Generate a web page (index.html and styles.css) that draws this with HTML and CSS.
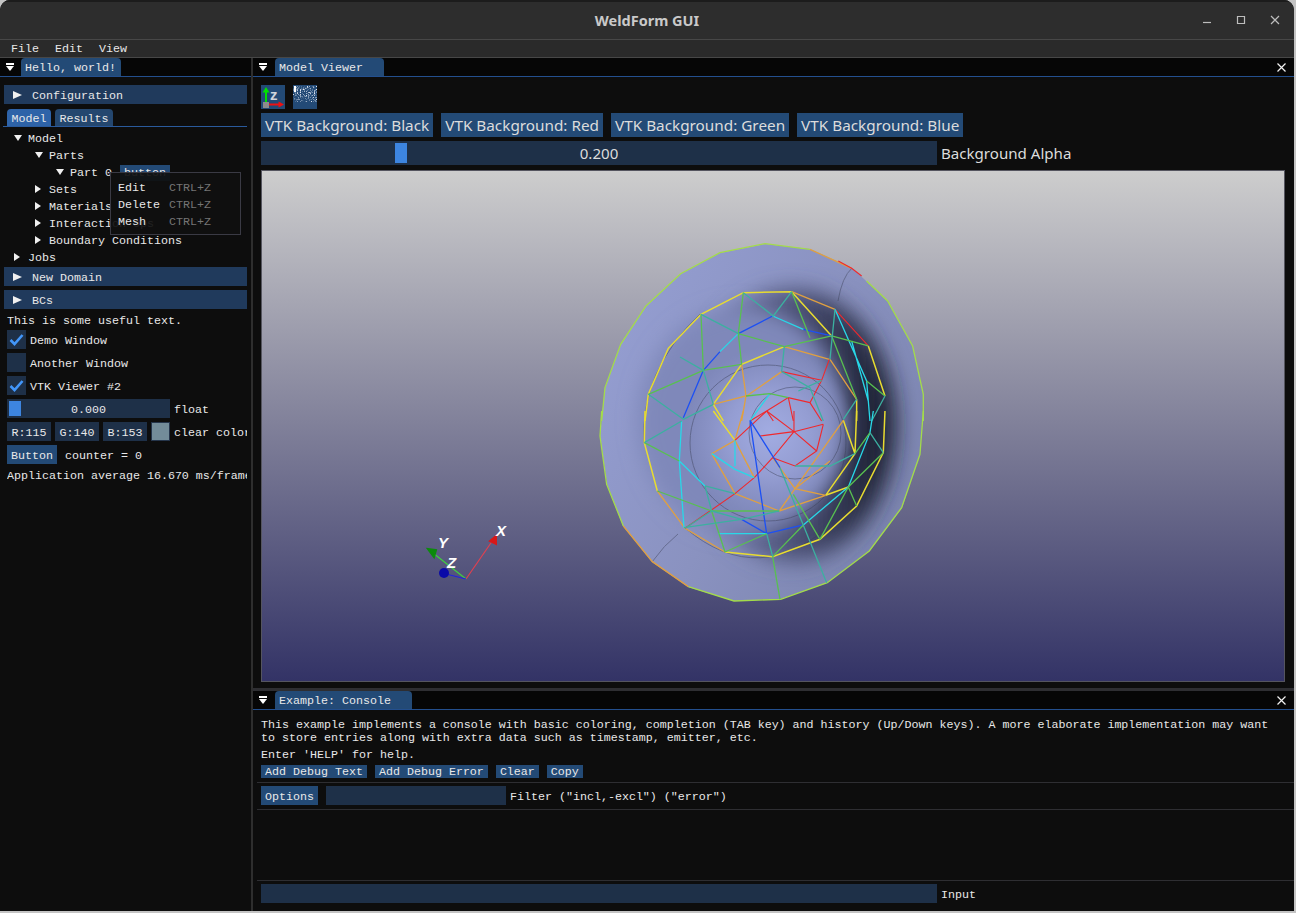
FILE: index.html

```html
<!DOCTYPE html>
<html lang="en">
<head>
    <meta charset="UTF-8">
    <title>WeldForm GUI</title>
    <link rel="stylesheet" href="styles.css">
</head>
<body>

<div class="window">
    <header class="titlebar">
        <span class="app-title">WeldForm GUI</span>
        <div class="win-controls">
            <svg width="12" height="12" viewBox="0 0 12 12"><path d="M2 8.500H10" class="win-icon"/></svg>
            <svg width="12" height="12" viewBox="0 0 12 12"><path d="M2.500 2.500H9.500V9.500H2.500Z" class="win-icon"/></svg>
            <svg width="12" height="12" viewBox="0 0 12 12"><path d="M2 2L10 10M10 2L2 10" class="win-icon"/></svg>
        </div>
    </header>

    <nav class="menubar">
        <span>File</span><span>Edit</span><span>View</span>
    </nav>

    <div class="workspace">
        <aside class="dock-left">
            <div class="tabbar">
                <i class="menu-btn"></i>
                <span class="dock-tab">Hello, world!</span>
            </div>
            <div class="panel">
                <div class="header-row"><i class="arrow-right big"></i>Configuration</div>
                <div class="inner-tabs">
                    <span class="inner-tab active">Model</span>
                    <span class="inner-tab">Results</span>
                </div>
                <div class="tree">
                    <div class="tree-row lvl0"><i class="arrow-down"></i>Model</div>
                    <div class="tree-row lvl1"><i class="arrow-down"></i>Parts</div>
                    <div class="tree-row lvl2"><i class="arrow-down"></i>Part 0<span class="tiny-btn">button</span></div>
                    <div class="tree-row lvl1"><i class="arrow-right"></i>Sets</div>
                    <div class="tree-row lvl1"><i class="arrow-right"></i>Materials</div>
                    <div class="tree-row lvl1"><i class="arrow-right"></i>Interaction Ops</div>
                    <div class="tree-row lvl1"><i class="arrow-right"></i>Boundary Conditions</div>
                    <div class="tree-row lvl0"><i class="arrow-right"></i>Jobs</div>
                </div>
                <div class="header-row"><i class="arrow-right big"></i>New Domain</div>
                <div class="header-row"><i class="arrow-right big"></i>BCs</div>
                <div class="text-row">This is some useful text.</div>
                <div class="check-row">
                    <span class="checkbox"><svg width="19" height="19" viewBox="0 0 19 19"><path d="M3.500 10L7.500 14L15.500 5" class="tick"/></svg></span><span>Demo Window</span>
                </div>
                <div class="check-row"><span class="checkbox"></span><span>Another Window</span></div>
                <div class="check-row">
                    <span class="checkbox"><svg width="19" height="19" viewBox="0 0 19 19"><path d="M3.500 10L7.500 14L15.500 5" class="tick"/></svg></span><span>VTK Viewer #2</span>
                </div>
                <div class="check-row">
                    <span class="slider float-slider"><i class="grab"></i>0.000</span><span>float</span>
                </div>
                <div class="check-row">
                    <span class="color-field">R:115</span>
                    <span class="color-field">G:140</span>
                    <span class="color-field">B:153</span>
                    <span class="swatch"></span><span>clear color</span>
                </div>
                <div class="check-row">
                    <span class="btn">Button</span><span class="counter">counter = 0</span>
                </div>
                <div class="text-row avg-row">Application average 16.670 ms/frame (60.0 FPS)</div>
            </div>

            <!-- context menu sits over the tree -->
            <div class="context-menu">
                <div class="menu-item"><span>Edit</span><em>CTRL+Z</em></div>
                <div class="menu-item"><span>Delete</span><em>CTRL+Z</em></div>
                <div class="menu-item"><span>Mesh</span><em>CTRL+Z</em></div>
            </div>
        </aside>

        <main class="dock-right">
            <section class="viewer">
                <div class="tabbar">
                    <i class="menu-btn"></i>
                    <span class="dock-tab viewer-tab">Model Viewer</span>
                    <svg class="close-x" width="9" height="9" viewBox="0 0 9 9"><path d="M.5 .5L8.500 8.500M8.500 .5L.5 8.500"/></svg>
                </div>
                <div class="viewer-body">
                    <div class="icon-row">
                        <span class="icon-btn">
                            <svg width="24" height="24" viewBox="0 0 24 24">
                                <path d="M5 18V6" class="ax-green"/>
                                <path d="M5 2L1.500 7.500H8.500Z" fill="#00e000"/>
                                <path d="M5 19.500H19" class="ax-red"/>
                                <path d="M23 19.500L17.500 16.500V22.500Z" fill="#f01010"/>
                                <rect x="2" y="17" width="6" height="6" fill="#8c8c8c"/>
                                <text x="9" y="15" class="ax-z">z</text>
                            </svg>
                        </span>
                        <span class="icon-btn">
                            <svg width="24" height="24" viewBox="0 0 24 24">
                                <filter id="speckle" x="0" y="0" width="100%" height="100%">
                                    <feTurbulence type="fractalNoise" baseFrequency="0.7" numOctaves="2" seed="7"/>
                                    <feColorMatrix values="0 0 0 0 .75 0 0 0 0 .8 0 0 0 0 .88 3 3 0 0 -3"/>
                                </filter>
                                <rect y="1" width="24" height="16" filter="url(#speckle)"/>
                                <rect x="1" y="1" width="2" height="6" fill="#fff"/>
                            </svg>
                        </span>
                    </div>
                    <div class="bg-buttons">
                        <span class="vtk-btn">VTK Background: Black</span>
                        <span class="vtk-btn">VTK Background: Red</span>
                        <span class="vtk-btn">VTK Background: Green</span>
                        <span class="vtk-btn">VTK Background: Blue</span>
                    </div>
                    <div class="alpha-row">
                        <span class="slider alpha-slider"><i class="grab alpha-grab"></i>0.200</span>
                        <span>Background Alpha</span>
                    </div>
                    <div class="viewport">
                        <svg width="1022" height="510" viewBox="262 170 1022 510">
                            <defs>
                                <clipPath id="ring-clip">
                                    <polygon points="765,243 810,248 852,267 888,300 913,345 923,393 920,453 902,507 869,550 827,582 781,598 734,600 688,586 652,561 623,525 607,483 600,435 605,387 621,343 646,305 681,273 720,252"/>
                                </clipPath>
                                <linearGradient id="ring-fill" x1="0" y1="0" x2="1" y2="0.600">
                                    <stop offset="0" stop-color="#97a1d6"/>
                                    <stop offset=".6" stop-color="#8a92c0"/>
                                    <stop offset="1" stop-color="#7c85b0"/>
                                </linearGradient>
                                <linearGradient id="crater-fill">
                                    <stop offset="0" stop-color="#7078a8"/>
                                    <stop offset=".55" stop-color="#474c70"/>
                                    <stop offset="1" stop-color="#141826"/>
                                </linearGradient>
                                <radialGradient id="sphere-fill">
                                    <stop offset="0" stop-color="#a2ace2"/>
                                    <stop offset=".5" stop-color="#949dd2"/>
                                    <stop offset="1" stop-color="#8f98cc" stop-opacity="0"/>
                                </radialGradient>
                                <filter id="soft" x="-40%" y="-40%" width="180%" height="180%"><feGaussianBlur stdDeviation="10"/></filter>
                                <filter id="softer" x="-30%" y="-30%" width="160%" height="160%"><feGaussianBlur stdDeviation="11"/></filter>
                            </defs>

                            <g clip-path="url(#ring-clip)">
                                <rect x="590" y="230" width="345" height="380" fill="url(#ring-fill)"/>
                                <ellipse cx="792" cy="424" rx="104" ry="136" fill="url(#crater-fill)" filter="url(#softer)"/>
                                <ellipse cx="742" cy="420" rx="104" ry="114" fill="#7f88ba" filter="url(#soft)"/>
                                <ellipse cx="770" cy="432" rx="84" ry="86" fill="url(#sphere-fill)"/>
                            </g>

                            <g class="scene">
                                <g class="arcs">
                                    <circle cx="768" cy="442" r="78"/>
                                    <circle cx="795" cy="432" r="46"/>
                                    <path d="M838 300Q842 276 852 267M652 561Q664 544 678 533M644 442Q640 370 700 313M685 527Q760 590 835 520"/>
                                </g>

                                <g class="mesh" transform="translate(590 230) scale(.3333)">
                                    <path class="m-l" d="M525 38L660 55M830 150L893 210L968 345L1000 490V570M35 570L45 470L92 340L168 225L272 128L390 65L525 38"/>
                                    <path class="m-o" d="M660 55L785 112"/>
                                    <path class="m-r" d="M745 90L785 112L815 135"/>
                                    <path class="m-y" d="M165 570L175 490L235 352L333 250L460 185L605 182L725 315M835 345L885 495M370 520L455 400L583 347M370 520L400 570M800 505V570"/>
                                    <path class="m-o" d="M605 182L735 235M583 347L718 385M720 385L800 505M455 400L468 495L455 570M470 495L575 422M370 520L468 495"/>
                                    <path class="m-r" d="M735 235L835 345M575 422L695 448M718 385L695 448L660 515M530 540L595 500L660 515M530 540L480 570M530 540L550 570M660 515L695 570M595 500L610 570"/>
                                    <path class="m-b" d="M340 418L280 560M445 308L548 255M640 295L725 315M340 418L390 362"/>
                                    <path class="m-c" d="M445 308L390 362M548 255L640 295M785 330L835 510M735 235L830 450L840 570M540 488L480 570"/>
                                    <path class="m-g" d="M460 185L445 308L455 400M333 250L340 418L455 400M583 347L725 315M445 308L583 347M340 418L175 490M725 315L800 505M725 315L835 345M830 450L885 495M605 182L660 320M540 488L595 500M468 495L540 488"/>
                                    <path class="m-t" d="M445 308L333 250M340 418L370 520M340 418L270 378M575 422L660 470L700 570M695 448L625 480M175 490L280 565M370 520L280 565M583 347L575 422M460 185L550 255L605 182M735 235L720 385M885 495L845 570M800 505L760 565"/>
                                </g>

                                <g class="mesh" transform="translate(590 410) scale(.3333)">
                                    <path class="m-l" d="M35 0L30 75L50 220L100 345M295 527L432 570L572 565L712 515L838 420L935 290L990 130L1000 0"/>
                                    <path class="m-o" d="M100 345L187 452L295 527"/>
                                    <path class="m-y" d="M165 0L163 95L202 240M800 0L795 128M885 0L880 125L800 285L690 385L548 437L405 423M370 0L435 88M795 128L707 253M795 128L760 28M775 228L707 253"/>
                                    <path class="m-o" d="M435 88L365 128L435 248M202 240L285 352L405 423M707 253L568 300L435 248M760 28L615 233L568 300M707 253L615 233L548 140M460 0L435 88L493 200M720 150L615 233"/>
                                    <path class="m-r" d="M612 62L530 0M612 62L700 40M612 62L680 120L615 165L548 140L612 62M612 62L612 0M612 62L510 75M493 200L435 248L285 352M493 200L548 140M680 120L700 40M530 0L435 88"/>
                                    <path class="m-b" d="M480 28L505 200L530 368M480 28L570 170M530 368L640 342M455 325L530 368"/>
                                    <path class="m-c" d="M275 30L268 150L282 350M268 150L345 225M640 342L775 228L840 65L850 0M385 368L530 368M435 88V165M365 128L435 175L493 200"/>
                                    <path class="m-g" d="M365 300L405 423M610 250L690 385M405 423L530 368M548 437L570 565M365 300L568 300M202 240L365 300M163 95L268 150M775 228L880 125M840 65L795 128M690 385L775 228L800 285M548 437L640 342"/>
                                    <path class="m-t" d="M530 368L548 437M570 170L710 515M345 225L435 248M345 225L365 300L455 325M285 352L365 300M795 128L720 165L615 165M275 30L163 95M282 350L455 325L568 300M840 65L880 125"/>
                                </g>
                            </g>

                            <g class="axes">
                                <path d="M466 578L493 539" class="ax-x"/>
                                <path d="M466 578L433 552" class="ax-y"/>
                                <path d="M466 578L446 573" class="ax-zl"/>
                                <path d="M496 535L490 540L496 543Z" fill="#d81818" stroke="#d81818" stroke-width="2"/>
                                <path d="M428 548L436 549L434 556Z" fill="#0c8a0c" stroke="#0c8a0c" stroke-width="2"/>
                                <circle cx="444" cy="572" r="5" fill="#0a0aa8"/>
                                <text x="496" y="535" class="ax-label">X</text>
                                <text x="438" y="547" class="ax-label">Y</text>
                                <text x="447" y="567" class="ax-label">Z</text>
                            </g>
                        </svg>
                    </div>
                </div>
            </section>

            <section class="console">
                <div class="tabbar">
                    <i class="menu-btn"></i>
                    <span class="dock-tab console-tab">Example: Console</span>
                    <svg class="close-x" width="9" height="9" viewBox="0 0 9 9"><path d="M.5 .5L8.500 8.500M8.500 .5L.5 8.500"/></svg>
                </div>
                <div class="console-body">
                    <p class="console-text">This example implements a console with basic coloring, completion (TAB key) and history (Up/Down keys). A more elaborate implementation may want<br>to store entries along with extra data such as timestamp, emitter, etc.</p>
                    <p class="console-help">Enter 'HELP' for help.</p>
                    <div class="console-buttons">
                        <span class="small-btn">Add Debug Text</span>
                        <span class="small-btn">Add Debug Error</span>
                        <span class="small-btn">Clear</span>
                        <span class="small-btn">Copy</span>
                    </div>
                    <div class="filter-row">
                        <span class="btn">Options</span>
                        <span class="filter-input"></span>
                        <span>Filter ("incl,-excl") ("error")</span>
                    </div>
                    <div class="log-area"></div>
                    <div class="input-row">
                        <span class="console-input"></span>
                        <span>Input</span>
                    </div>
                </div>
            </section>
        </main>
    </div>
</div>

</body>
</html>
```

FILE: styles.css

```css
* {
    box-sizing: border-box;
}
body {
    margin: 0;
    width: 1296px;
    height: 913px;
    overflow: hidden;
    background-color: #c4c4c4;
    font-family: "Liberation Mono", "DejaVu Sans Mono", monospace;
    font-size: 11.67px;
    line-height: 13px;
    color: #e8e8e8;
    white-space: nowrap;
}
i {
    display: block;
}
p {
    margin: 0;
}
.window {
    width: 1294px;
    height: 911px;
    display: flex;
    flex-direction: column;
    background-color: #0d0d0d;
    border-radius: 10px 10px 0 0;
    overflow: hidden;
}

/* title bar + menu */
.titlebar {
    height: 40px;
    flex: none;
    display: flex;
    align-items: center;
    justify-content: center;
    position: relative;
    background-color: #2d2d2d;
    border-top: 2px solid #1c1c1c;
    border-bottom: 1px solid #474747;
}
.app-title {
    font-family: "Noto Sans", sans-serif;
    font-weight: 700;
    font-size: 14.500px;
    color: #c9c9c9;
}
.win-controls {
    position: absolute;
    right: 13px;
    top: 12px;
    display: flex;
    gap: 22px;
}
.win-icon {
    fill: none;
    stroke: #bdbdbd;
    stroke-width: 1.200;
}
.menubar {
    height: 18px;
    flex: none;
    display: flex;
    gap: 16px;
    padding-left: 11px;
    align-items: center;
    background-color: #2a2a2a;
    border-bottom: 1px solid #474747;
}
.menubar span {
    padding-top: 2px;
}
.workspace {
    flex: 1;
    display: flex;
    min-height: 0;
}

/* docks */
.dock-left {
    width: 253px;
    flex: none;
    position: relative;
    border-right: 2px solid #2e2e2e;
    overflow: hidden;
}
.dock-right {
    flex: 1;
    min-width: 0;
    display: flex;
    flex-direction: column;
}
.tabbar {
    height: 19px;
    flex: none;
    display: flex;
    align-items: flex-end;
    position: relative;
    background-color: #060606;
    border-bottom: 1px solid #234f8e;
}
.dock-tab {
    height: 18px;
    margin-left: 21px;
    padding: 4px 4px 0;
    background-color: #234a76;
    border-radius: 4px 4px 0 0;
}
.dock-left .dock-tab {
    width: 100px;
}
.viewer-tab {
    width: 109px;
    margin-left: 22px;
}
.console-tab {
    width: 137px;
    margin-left: 22px;
}
.menu-btn {
    position: absolute;
    left: 6px;
    top: 5px;
    width: 8px;
    height: 2px;
    background-color: #fff;
}
.menu-btn::after {
    content: "";
    position: absolute;
    top: 3px;
    left: 0;
    border-style: solid;
    border-width: 5px 4px 0;
    border-color: #fff transparent transparent;
}
.close-x {
    position: absolute;
    right: 8px;
    top: 5px;
}
.close-x path {
    stroke: #f2f2f2;
    stroke-width: 1.200;
}

/* left panel */
.panel {
    padding: 8px 4px 0;
    width: 251px;
}
.panel > * {
    overflow: hidden;
}
.header-row {
    height: 19px;
    line-height: 22px;
    margin-bottom: 4px;
    padding-left: 28px;
    position: relative;
    background-color: #203a5c;
}
.arrow-right,
.arrow-down {
    position: absolute;
    width: 0;
    height: 0;
    border-style: solid;
}
.arrow-right {
    border-width: 4px 0 4px 6px;
    border-color: transparent transparent transparent #f0f0f0;
}
.arrow-down {
    border-width: 6px 4px 0;
    border-color: #f0f0f0 transparent transparent;
}
.arrow-right.big {
    left: 9px;
    top: 6px;
    border-width: 4.500px 0 4.500px 9px;
}
.inner-tabs {
    height: 18px;
    margin-top: 5px;
    padding-left: 4px;
    display: flex;
    gap: 4px;
    align-items: flex-end;
    border-bottom: 1px solid #2a5a9c;
    margin-left: -1px;
}
.inner-tab {
    height: 17px;
    padding: 4px 4.500px 0;
    background-color: #24476f;
    border-radius: 4px 4px 0 0;
}
.inner-tab.active {
    background-color: #2e63a8;
}
.tree {
    padding-top: 3px;
    margin-bottom: 1px;
}
.tree-row {
    height: 17px;
    line-height: 19px;
    position: relative;
}
.lvl0 {
    padding-left: 24px;
}
.lvl1 {
    padding-left: 45px;
}
.lvl2 {
    padding-left: 66px;
}
.lvl0 i {
    left: 10px;
    top: 5px;
}
.lvl1 i {
    left: 31px;
    top: 5px;
}
.lvl2 i {
    left: 52px;
    top: 5px;
}
.tree-row i.arrow-right {
    top: 4px;
}
.tiny-btn {
    margin-left: 8px;
    padding: 1px 4px;
    background-color: #234a76;
}
.text-row {
    height: 15px;
    line-height: 17px;
    margin: 0 0 2px 3px;
}
.avg-row {
    margin-top: 0;
}
.check-row {
    height: 19px;
    line-height: 22px;
    margin: 0 0 4px 3px;
    display: flex;
    align-items: flex-start;
    gap: 4px;
}
.checkbox {
    width: 19px;
    height: 19px;
    flex: none;
    background-color: #1e3048;
}
.tick {
    fill: none;
    stroke: #4296fa;
    stroke-width: 2.600;
}
.slider {
    height: 19px;
    position: relative;
    flex: none;
    text-align: center;
    background-color: #1e3048;
}
.float-slider {
    width: 163px;
}
.grab {
    position: absolute;
    left: 2px;
    top: 2px;
    bottom: 2px;
    width: 12px;
    background-color: #3d85e0;
}
.color-field {
    width: 44px;
    height: 19px;
    flex: none;
    text-align: center;
    background-color: #1e3048;
}
.swatch {
    width: 19px;
    height: 19px;
    flex: none;
    background-color: #738c99;
    border: 1px solid #25354b;
}
.btn {
    height: 19px;
    line-height: 22px;
    padding: 0 4px;
    background-color: #234a76;
}
.counter {
    margin-left: 4px;
}

/* popup over the tree */
.context-menu {
    position: absolute;
    left: 110px;
    top: 114px;
    width: 131px;
    height: 63px;
    padding: 6px 7px;
    background-color: rgba(15, 15, 15, 0.92);
    border: 1px solid #3a3a44;
}
.menu-item {
    height: 17px;
    line-height: 19px;
    display: flex;
}
.menu-item span {
    width: 51px;
}
.menu-item em {
    font-style: normal;
    color: #757575;
}

/* model viewer */
.viewer {
    height: 633px;
    flex: none;
    border-bottom: 3px solid #2e2e32;
}
.viewer-body {
    padding: 8px 0 0 8px;
}
.icon-row {
    display: flex;
    gap: 8px;
    margin-bottom: 4px;
}
.icon-btn {
    width: 24px;
    height: 24px;
    background-color: #234a76;
}
.icon-btn svg {
    display: block;
}
.ax-green {
    stroke: #00e000;
    stroke-width: 2;
}
.ax-red {
    stroke: #f01010;
    stroke-width: 2;
}
.ax-z {
    font-family: "Liberation Sans", sans-serif;
    font-weight: 700;
    font-size: 15px;
    fill: #d0d4dc;
}
.bg-buttons {
    display: flex;
    gap: 8px;
    margin-bottom: 4px;
}
.vtk-btn {
    height: 24px;
    line-height: 24px;
    padding: 0 4px;
    background-color: #234a76;
    font-family: "Noto Sans", sans-serif;
    font-size: 15.300px;
    color: #dcdcdc;
}
.alpha-row {
    height: 24px;
    line-height: 24px;
    display: flex;
    gap: 4px;
    align-items: flex-start;
    margin-bottom: 5px;
    font-family: "Noto Sans", sans-serif;
    font-size: 15.100px;
    color: #dcdcdc;
}
.alpha-slider {
    width: 676px;
    height: 24px;
}
.alpha-grab {
    left: 134px;
}
.viewport {
    width: 1024px;
    height: 512px;
    border: 1px solid #55555f;
    background: linear-gradient(#cdcdcd, #333366);
}
.viewport svg {
    display: block;
}
.scene {
    filter: blur(.3px);
}
.arcs {
    fill: none;
    stroke: #3a3f55;
    stroke-width: 1;
    opacity: .45;
}
.mesh path {
    fill: none;
    stroke-width: 1.300;
    vector-effect: non-scaling-stroke;
}
.mesh .m-y {
    stroke-width: 1.500;
}
.mesh .m-r {
    stroke-width: 1.100;
}
.m-l { stroke: #a3dc4a; }
.m-y { stroke: #e8dc30; }
.m-o { stroke: #e0a040; }
.m-r { stroke: #f0282c; }
.m-b { stroke: #1c50f4; }
.m-c { stroke: #28d8e8; }
.m-g { stroke: #58c050; }
.m-t { stroke: #3cb0a0; }
.ax-x {
    stroke: #e04050;
    stroke-width: 1.200;
}
.ax-y {
    stroke: #40d040;
    stroke-width: 1.200;
}
.ax-zl {
    stroke: #2020e0;
    stroke-width: 1.200;
}
.ax-label {
    font-family: "Liberation Sans", sans-serif;
    font-style: italic;
    font-weight: 700;
    font-size: 15px;
    fill: #fff;
}

/* console */
.console {
    flex: 1;
    min-height: 0;
}
.console-body {
    padding: 9px 0 0 8px;
}
.console-help {
    margin-top: 4px;
}
.console-buttons {
    display: flex;
    gap: 8px;
    margin-top: 3px;
    padding-bottom: 4px;
    border-bottom: 1px solid #2e2e32;
    margin-left: -4px;
    padding-left: 4px;
}
.small-btn {
    height: 13px;
    line-height: 15px;
    padding: 0 4px;
    background-color: #234a76;
}
.filter-row {
    display: flex;
    gap: 4px;
    line-height: 22px;
    align-items: flex-start;
    height: 27px;
    padding: 3px 4px 4px;
    margin-left: -4px;
    border-bottom: 1px solid #2e2e32;
}
.filter-row .btn {
    margin-right: 4px;
}
.filter-input {
    width: 180px;
    height: 19px;
    background-color: #1e3048;
}
.log-area {
    height: 70px;
}
.input-row {
    display: flex;
    gap: 4px;
    line-height: 22px;
    align-items: flex-start;
    padding: 3px 4px 0;
    margin-left: -4px;
    border-top: 1px solid #2e2e32;
}
.console-input {
    width: 676px;
    height: 19px;
    background-color: #1e3048;
}
```
